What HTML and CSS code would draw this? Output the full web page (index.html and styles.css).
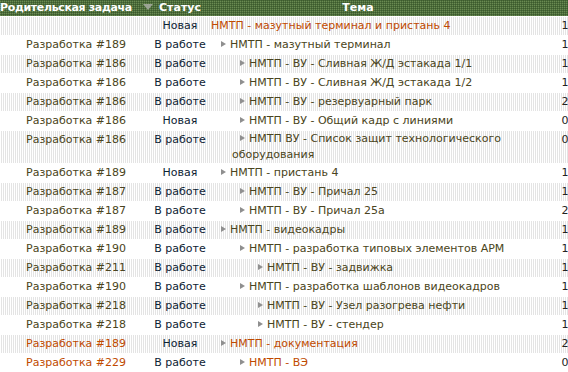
FILE: index.html
```html
<!DOCTYPE html>
<html>
<head>
<meta charset="utf-8">
<link rel="stylesheet" href="styles.css">
</head>
<body>
<table class="grid">
  <colgroup>
    <col class="c-parent"><col class="c-status"><col class="c-topic"><col class="c-date">
  </colgroup>
  <thead>
    <tr>
      <th class="h-parent"><span class="h-txt">Родительская задача</span><span class="sort"></span></th>
      <th>Статус</th>
      <th>Тема</th>
      <th>Срок</th>
    </tr>
  </thead>
  <tbody>
    <tr class="odd"><td></td><td class="st">Новая</td><td class="topic hot l0">НМТП - мазутный терминал и пристань 4</td><td class="dt">12.03.2010</td></tr>
    <tr class="even"><td class="par">Разработка #189</td><td class="st">В работе</td><td class="topic l1"><i class="tri"></i>НМТП - мазутный терминал</td><td class="dt">12.03.2010</td></tr>
    <tr class="odd"><td class="par">Разработка #186</td><td class="st">В работе</td><td class="topic l2"><i class="tri"></i>НМТП - ВУ - Сливная Ж/Д эстакада 1/1</td><td class="dt">12.03.2010</td></tr>
    <tr class="even"><td class="par">Разработка #186</td><td class="st">В работе</td><td class="topic l2"><i class="tri"></i>НМТП - ВУ - Сливная Ж/Д эстакада 1/2</td><td class="dt">12.03.2010</td></tr>
    <tr class="odd"><td class="par">Разработка #186</td><td class="st">В работе</td><td class="topic l2"><i class="tri"></i>НМТП - ВУ - резервуарный парк</td><td class="dt">22.03.2010</td></tr>
    <tr class="even"><td class="par">Разработка #186</td><td class="st">Новая</td><td class="topic l2"><i class="tri"></i>НМТП - ВУ - Общий кадр с линиями</td><td class="dt">01.04.2010</td></tr>
    <tr class="odd"><td class="par">Разработка #186</td><td class="st">В работе</td><td class="topic wrap"><i class="tri"></i>НМТП ВУ - Список защит технологического оборудования</td><td class="dt">01.04.2010</td></tr>
    <tr class="even"><td class="par">Разработка #189</td><td class="st">Новая</td><td class="topic l1"><i class="tri"></i>НМТП - пристань 4</td><td class="dt">12.03.2010</td></tr>
    <tr class="odd"><td class="par">Разработка #187</td><td class="st">В работе</td><td class="topic l2"><i class="tri"></i>НМТП - ВУ - Причал 25</td><td class="dt">12.03.2010</td></tr>
    <tr class="even"><td class="par">Разработка #187</td><td class="st">В работе</td><td class="topic l2"><i class="tri"></i>НМТП - ВУ - Причал 25а</td><td class="dt">22.03.2010</td></tr>
    <tr class="odd"><td class="par">Разработка #189</td><td class="st">В работе</td><td class="topic l1"><i class="tri"></i>НМТП - видеокадры</td><td class="dt">12.03.2010</td></tr>
    <tr class="even"><td class="par">Разработка #190</td><td class="st">В работе</td><td class="topic l2"><i class="tri"></i>НМТП - разработка типовых элементов АРМ</td><td class="dt">12.03.2010</td></tr>
    <tr class="odd"><td class="par">Разработка #211</td><td class="st">В работе</td><td class="topic l3"><i class="tri"></i>НМТП - ВУ - задвижка</td><td class="dt">12.03.2010</td></tr>
    <tr class="even"><td class="par">Разработка #190</td><td class="st">В работе</td><td class="topic l2"><i class="tri"></i>НМТП - разработка шаблонов видеокадров</td><td class="dt">12.03.2010</td></tr>
    <tr class="odd"><td class="par">Разработка #218</td><td class="st">В работе</td><td class="topic l3"><i class="tri"></i>НМТП - ВУ - Узел разогрева нефти</td><td class="dt">12.03.2010</td></tr>
    <tr class="even"><td class="par">Разработка #218</td><td class="st">В работе</td><td class="topic l3"><i class="tri"></i>НМТП - ВУ - стендер</td><td class="dt">12.03.2010</td></tr>
    <tr class="odd"><td class="par hot">Разработка #189</td><td class="st">Новая</td><td class="topic hot l1"><i class="tri"></i>НМТП - документация</td><td class="dt">22.03.2010</td></tr>
    <tr class="even"><td class="par hot">Разработка #229</td><td class="st">В работе</td><td class="topic hot l2"><i class="tri"></i>НМТП - ВЭ</td><td class="dt">01.04.2010</td></tr>
  </tbody>
</table>
</body>
</html>
```
FILE: styles.css
```css
html, body {
  margin: 0;
  padding: 0;
  background: #fff;
  overflow: hidden;
}
body {
  width: 568px;
  height: 372px;
  font-family: "DejaVu Sans", Tahoma, sans-serif;
  font-size: 11px;
}
.grid {
  border-collapse: collapse;
  table-layout: fixed;
  width: 678px;
}
.c-parent { width: 152px; }
.c-status { width: 56px; }
.c-topic { width: 300px; }
.c-date { width: 170px; }

.grid th {
  height: 16px;
  padding: 0;
  color: #fff;
  font-weight: bold;
  font-size: 11px;
  line-height: 15px;
  text-align: center;
  white-space: nowrap;
  vertical-align: top;
  background-color: #4b6b3a;
  background-image: conic-gradient(#3c5a2d 25%, transparent 0 50%, #6a8a52 0 75%, transparent 0);
  background-size: 2px 2px;
}
.grid th.h-parent {
  text-align: left;
}
.h-txt {
  letter-spacing: -0.35px;
}
.sort {
  display: inline-block;
  margin-left: 11px;
  width: 0;
  height: 0;
  border-left: 5px solid transparent;
  border-right: 5px solid transparent;
  border-top: 6px solid #9aa393;
  vertical-align: 1px;
}
.grid td {
  padding: 0 2px;
  height: 18px;
  line-height: 18px;
  border-top: 1px solid #fff;
  color: #4a4420;
  white-space: nowrap;
  vertical-align: top;
}
.grid tr.odd td {
  background-image: conic-gradient(#c9c9c9 25%, #fff 0);
  background-size: 2px 2px;
}
.grid td.par { text-align: center; }
.grid td.st { text-align: center; color: #0d2233; padding: 0; }
.grid td.topic {
  padding-right: 0;
}
.grid td.topic.wrap {
  white-space: normal;
  line-height: 16px;
  padding-left: 24px;
  text-indent: 8px;
}
.grid td.dt { color: #222; text-align: center; }
.hot, .grid td.hot { color: #c04a00; }

.topic.l0 { padding-left: 3px; }
.topic.l1 { padding-left: 13px; }
.topic.l2 { padding-left: 32px; }
.topic.l3 { padding-left: 50px; }

.tri {
  display: inline-block;
  width: 0;
  height: 0;
  border-top: 3px solid transparent;
  border-bottom: 3px solid transparent;
  border-left: 5px solid #8f8f8f;
  margin-right: 4px;
  vertical-align: 1px;
}
```
